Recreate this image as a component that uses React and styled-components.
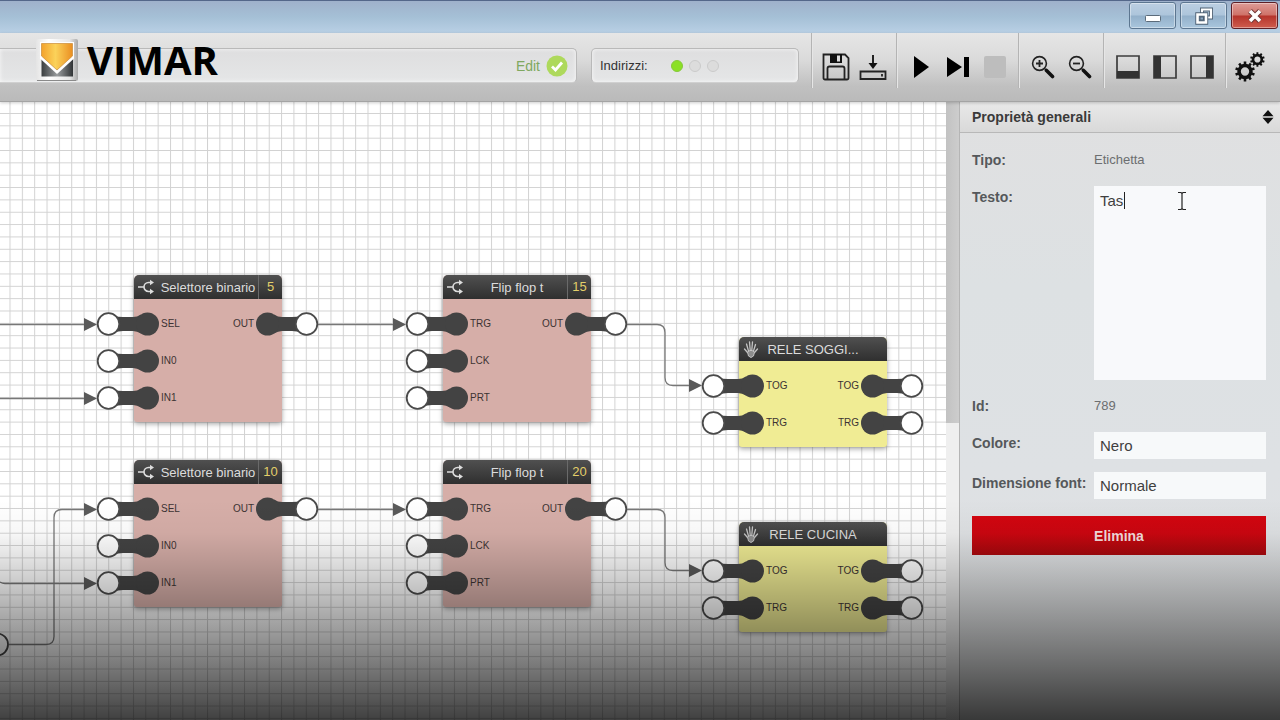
//App.jsx
import React from "react";
import styled, { createGlobalStyle } from "styled-components";

const GlobalStyle = createGlobalStyle`
  * {
    box-sizing: border-box;
  }
  body {
    margin: 0;
    font-family: "Liberation Sans", Arial, sans-serif;
    color: #444;
  }
  button, select, textarea {
    font-family: inherit;
    border: none;
    outline: none;
    margin: 0;
  }
`;

const Window = styled.div`
  position: relative;
  display: flex;
  flex-direction: column;
  min-height: 100vh;
`;

/* title bar */

const TitleBar = styled.header`
  display: flex;
  justify-content: flex-end;
  gap: 4px;
  height: 33px;
  padding: 1px 2px 0 0;
  border-top: 1px solid #54678a;
  background: linear-gradient(#9fb1cb, #a5c0d6 50%, #b9d0e5);
`;

const WindowButton = styled.button`
  display: flex;
  align-items: center;
  justify-content: center;
  width: 47px;
  height: 27px;
  padding: 0;
  border: 1px solid ${(p) => (p.$close ? "#5e1f26" : "#5c7690")};
  border-radius: 3px;
  box-shadow: inset 0 0 0 1px rgba(255, 255, 255, 0.4);
  background: ${(p) =>
    p.$close
      ? "linear-gradient(#dd9c97, #cf7268 48%, #b5342b 52%, #cf5c4e)"
      : "linear-gradient(#bccfe2, #adc5db 48%, #93b0ca 52%, #a9c6dd)"};
`;

/* toolbar */

const Toolbar = styled.div`
  position: relative;
  z-index: 2;
  display: flex;
  height: 69px;
  padding-right: 7px;
  border-bottom: 1px solid #a4a4a4;
  background: linear-gradient(#e6e6e6, #dadada 40%, #c0c0c0 78%, #bababa);
  box-shadow: 0 1px 3px rgba(0, 0, 0, 0.2);
`;

const StatusBox = styled.div`
  display: flex;
  align-items: center;
  height: 35px;
  margin-top: 15px;
  border: 1px solid #b9b9b9;
  border-bottom-color: #d0d0d0;
  background: linear-gradient(#dededf, #e5e6e7);
  box-shadow: inset 0 0 4px rgba(255, 255, 255, 0.8);
  font-size: 13px;
`;

const ModeBox = styled(StatusBox)`
  flex: 1;
  padding: 0 8px 0 36px;
  border-left: none;
  border-radius: 0 5px 5px 0;
`;

const AddressBox = styled(StatusBox)`
  width: 208px;
  margin-left: 14px;
  margin-right: 12px;
  padding-left: 8px;
  border-radius: 5px;
  color: #333;
`;

const Brand = styled.a`
  display: flex;
  align-items: center;
  gap: 8px;
  margin-top: -12px;
  margin-right: auto;
  color: #000;
  font-family: "Open Sans", sans-serif;
  font-size: 40px;
  font-weight: 700;
  line-height: 44px;
  text-decoration: none;
`;

const Mode = styled.span`
  display: flex;
  align-items: center;
  gap: 6px;
  color: #7fa860;
  font-size: 14px;
`;

const Dots = styled.span`
  display: flex;
  gap: 6px;
  margin-left: 23px;
`;

const Dot = styled.i`
  width: 12px;
  height: 12px;
  border: 1px solid ${(p) => (p.$on ? "#86c83c" : "#cbcbcb")};
  border-radius: 50%;
  background: ${(p) => (p.$on ? "#8be025" : "#dcdcdc")};
`;

const ToolGroup = styled.div`
  display: flex;
  align-items: center;
  height: 55px;
  padding: 13px 5px 0;
  border-left: 1px solid #b4b4b4;
  box-shadow: inset 1px 0 0 #e6e6e6;
`;

const ToolButton = styled.button`
  display: flex;
  align-items: center;
  justify-content: center;
  width: 37px;
  height: 37px;
  padding: 0;
  background: none;
`;

/* work area */

const Workspace = styled.main`
  display: flex;
  flex: 1;
`;

const Canvas = styled.section`
  position: relative;
  flex: 1;
  overflow: hidden;
  background: #fff;
`;

const Wires = styled.svg`
  position: absolute;
  top: 0;
  left: 0;
  width: 100%;
  height: 100%;
`;

const ScrollTrack = styled.div`
  width: 14px;
  border-right: 1px solid #b5b5b5;
  background: #efefef;
`;

const ScrollThumb = styled.div`
  height: 52%;
  background: linear-gradient(90deg, #c2c2c2, #cdcdcd);
`;

const Block = styled.article`
  position: absolute;
  left: ${(p) => p.$x}px;
  top: ${(p) => p.$y}px;
  width: 148px;
  border-radius: 5px 5px 3px 3px;
  background: ${(p) => p.$color};
  box-shadow: 0 2px 5px rgba(0, 0, 0, 0.35);
`;

const BlockHeader = styled.div`
  display: flex;
  align-items: center;
  height: 24px;
  border-radius: 5px 5px 0 0;
  background: linear-gradient(#505050, #2f2f2f);
  color: #dcdcdc;
  font-size: 13px;
`;

const BlockIcon = styled.span`
  display: flex;
  width: 24px;
  padding-left: 4px;
`;

const BlockTitle = styled.span`
  flex: 1;
  text-align: center;
  white-space: nowrap;
`;

const BlockNumber = styled.span`
  width: 24px;
  border-left: 1px solid ${(p) => (p.$empty ? "transparent" : "#6a6a6a")};
  color: #e3cf6a;
  line-height: 24px;
  text-align: center;
`;

const BlockBody = styled.div`
  padding: 6px 0;
`;

const PortRow = styled.div`
  display: flex;
  justify-content: space-between;
  height: 37px;
`;

const Port = styled.span`
  display: flex;
  align-items: center;
  flex-direction: ${(p) => (p.$out ? "row-reverse" : "row")};
  margin: ${(p) => (p.$out ? "0 -37px 0 0" : "0 0 0 -38px")};
  gap: 1px;
  color: #3c3333;
  font-size: 10px;
`;

/* properties */

const Panel = styled.aside`
  width: 320px;
  background: linear-gradient(#e0e0e1, #dde1e3 30%, #dee1e4 60%, #dfe0e0);
`;

const PanelHeader = styled.h2`
  display: flex;
  align-items: center;
  justify-content: space-between;
  height: 31px;
  margin: 0;
  padding: 0 6px 0 12px;
  border-bottom: 1px solid #b8b8b8;
  background: linear-gradient(#e9e9e9, #d9d9d9);
  color: #3a3a3a;
  font-size: 14px;
`;

const Form = styled.form`
  padding: 18px 14px 0 12px;
`;

const Field = styled.div`
  position: relative;
  display: grid;
  grid-template-columns: 122px 1fr;
  align-items: start;
  margin-bottom: ${(p) => (p.$tight ? 13 : 17)}px;
  line-height: 18px;
`;

const Label = styled.label`
  padding-top: ${(p) => (p.$box ? 2 : 0)}px;
  color: #55585b;
  font-size: 14px;
  font-weight: 700;
  white-space: nowrap;
`;

const Value = styled.output`
  color: #6c6e70;
  font-size: 13px;
`;

const TextArea = styled.textarea`
  display: block;
  width: 100%;
  height: 194px;
  padding: 6px;
  background: #f8f9fb;
  color: #3f3f3f;
  font-size: 15px;
  line-height: 18px;
  resize: none;
`;

const Select = styled.select`
  width: 100%;
  height: 27px;
  padding: 0 6px;
  appearance: none;
  border-radius: 0;
  background: #f7f9fa;
  color: #3f3f3f;
  font-size: 15px;
`;

const Caret = styled.i`
  position: absolute;
  top: 6px;
  left: 152px;
  width: 1px;
  height: 17px;
  background: #222;
`;

const Pointer = styled.svg`
  position: absolute;
  top: 5px;
  left: 205px;
`;

const DeleteButton = styled.button`
  width: 100%;
  height: 39px;
  margin-top: 4px;
  background: linear-gradient(#d3050f, #cb0610 45%, #a8090d);
  color: #f3dcdc;
  font-size: 14px;
  font-weight: 700;
`;

const Shade = styled.div`
  position: absolute;
  z-index: 3;
  left: 0;
  right: 0;
  bottom: 0;
  height: 220px;
  pointer-events: none;
  background: linear-gradient(
    rgba(0, 0, 0, 0),
    rgba(0, 0, 0, 0.03) 15%,
    rgba(0, 0, 0, 0.12) 27%,
    rgba(0, 0, 0, 0.28) 46%,
    rgba(0, 0, 0, 0.52) 75%,
    rgba(0, 0, 0, 0.75)
  );
`;

const Logo = () => (
  <svg width="43" height="44" viewBox="0 0 43 44">
    <defs>
      <linearGradient id="tile" x1="0" x2="1">
        <stop offset="0" stopColor="#e4e4e4" />
        <stop offset="0.3" stopColor="#fff" />
        <stop offset="0.8" stopColor="#e6e6e6" />
        <stop offset="1" stopColor="#a9a9a9" />
      </linearGradient>
      <linearGradient id="gold" x1="0" x2="1">
        <stop offset="0" stopColor="#f3a22c" />
        <stop offset="0.45" stopColor="#fbd25a" />
        <stop offset="1" stopColor="#ea8f22" />
      </linearGradient>
      <linearGradient id="steel" x1="0" x2="1">
        <stop offset="0" stopColor="#3a3e40" />
        <stop offset="0.5" stopColor="#9a9d9f" />
        <stop offset="1" stopColor="#303335" />
      </linearGradient>
    </defs>
    <rect x="0" y="1" width="42" height="42" rx="2" fill="url(#tile)" />
    <path d="M1 42.500h39" stroke="#8a8a8a" />
    <path d="M5.500 20h31.500v18.500H5.500z" fill="url(#steel)" />
    <path d="M4 4h34v16.500L21 36 4 20.500z" fill="#fff" />
    <path d="M5.500 5.500h31v12.500L21 32 5.500 18z" fill="url(#gold)" stroke="#c98b36" strokeWidth="0.700" />
  </svg>
);

const CheckIcon = () => (
  <svg width="22" height="22" viewBox="0 0 22 22">
    <circle cx="11" cy="11" r="10.500" fill="#aed95c" />
    <path d="M6 11.500 9.500 15 16 7.500" fill="none" stroke="#fff" strokeWidth="2.800" />
  </svg>
);

const SaveIcon = () => (
  <svg width="28" height="28" viewBox="0 0 28 28" fill="none" stroke="#222" strokeWidth="1.800">
    <path d="M1.500 1.500h21.500l3.500 3.500v20a1.500 1.500 0 0 1-1.500 1.500H3a1.500 1.500 0 0 1-1.500-1.500z" />
    <path d="M5.500 26V15.500a2 2 0 0 1 2-2h13a2 2 0 0 1 2 2V26" />
    <path d="M8 1h12v9H8z" fill="#111" stroke="none" />
    <path d="M15 2.500h3v6h-3z" fill="#ddd" stroke="none" />
  </svg>
);

const DownloadIcon = () => (
  <svg width="28" height="28" viewBox="0 0 28 28" fill="none" stroke="#222" strokeWidth="1.800">
    <path d="M1.500 18.500h25v7.500h-25z" />
    <path d="M14 2v9" strokeWidth="2" />
    <path d="M9.500 10h9L14 16z" fill="#111" stroke="none" />
    <path d="M23 21v2.500" />
  </svg>
);

const PlayIcon = () => (
  <svg width="24" height="24" viewBox="0 0 24 24">
    <path d="M5 1v22l15-11z" fill="#000" />
  </svg>
);

const StepIcon = () => (
  <svg width="24" height="24" viewBox="0 0 24 24">
    <path d="M1 2v20l15-10zM18 2h5v20h-5z" fill="#000" />
  </svg>
);

const StopIcon = () => (
  <svg width="24" height="24" viewBox="0 0 24 24">
    <rect x="1" y="1" width="22" height="22" rx="2" fill="#bdbdbd" />
  </svg>
);

const ZoomIcon = ({ plus }) => (
  <svg width="24" height="24" viewBox="0 0 24 24" fill="none" stroke="#222">
    <circle cx="8.500" cy="8.500" r="6.900" strokeWidth="1.600" />
    <path d={plus ? "M5 8.500h7M8.500 5v7" : "M5 8.500h7"} strokeWidth="1.800" />
    <path d="m14 14 1.500 1.500" strokeWidth="2" />
    <path d="m15.500 15.500 6 6" stroke="#111" strokeWidth="3.600" strokeLinecap="round" />
  </svg>
);

const LAYOUT_BARS = { bottom: "M1 16h22v7H1z", left: "M1 1h7v22H1z", right: "M16 1h7v22h-7z" };

const LayoutIcon = ({ side }) => (
  <svg width="24" height="24" viewBox="0 0 24 24">
    <path d="M1 1h22v22H1z" fill="none" stroke="#3c3c3c" strokeWidth="1.700" />
    <path d={LAYOUT_BARS[side]} fill="#333" />
  </svg>
);

const Gear = ({ cx, cy, r }) => (
  <g transform={`translate(${cx} ${cy})`} stroke="#111">
    <circle r={r * 0.6} fill="none" strokeWidth={r * 0.36} />
    {[0, 36, 72, 108, 144].map((a) => (
      <path
        key={a}
        d={`M0 ${-r}V${-r * 0.62}M0 ${r}V${r * 0.62}`}
        strokeWidth={r * 0.26}
        transform={`rotate(${a})`}
      />
    ))}
  </g>
);

const GearsIcon = () => (
  <svg width="30" height="30" viewBox="0 0 30 30">
    <Gear cx={10} cy={19.500} r={9.900} />
    <Gear cx={22.400} cy={7.500} r={7.300} />
  </svg>
);

const LogicIcon = () => (
  <svg width="18" height="16" viewBox="0 0 18 16" fill="none" stroke="#ddd" strokeWidth="1.600">
    <path d="M0 8h6M13 3.500h-2.500a4.500 4.500 0 0 0 0 9H13" />
    <path d="M12 .8 16 3.500 12 6.200zM12 9.800l4 2.700-4 2.700z" fill="#ddd" stroke="none" />
  </svg>
);

const HandIcon = () => (
  <svg width="16" height="18" viewBox="0 0 16 18" fill="none" stroke="#c4c4c4" strokeWidth="1.300">
    <path d="M5.500 11 3.500 4M7.200 10 6.500 2M8.800 10 9.500 2M10.500 11l2-6.500M4.500 12.500 1.500 9M11.500 12.500l3-3.500" strokeLinecap="round" />
    <path d="M4.500 12 7 10.500h2l2.500 1.500-1 4-2.500 1.500-2.500-1.500z" fill="#8d8d8d" strokeWidth="1" />
  </svg>
);

const PinIcon = ({ flip }) => (
  <svg width="64" height="26" viewBox="0 0 64 26">
    <g transform={flip ? "translate(64 0) scale(-1 1)" : undefined}>
      <path d="M18 4.500q4 1.500 9 1.500h10q4 0 8-2.500v19q-4-2.500-8-2.500H27q-5 0-9 1.500z" fill="#434343" />
      <circle cx="51.500" cy="13" r="11.500" fill="#434343" />
      <circle cx="12.500" cy="13" r="10.800" fill="#fff" stroke="#4a4a4a" strokeWidth="1.800" />
    </g>
  </svg>
);

const blocks = [
  { x: 134, y: 173, title: "Selettore binario", number: 5, ins: ["SEL", "IN0", "IN1"], outs: ["OUT"] },
  { x: 443, y: 173, title: "Flip flop t", number: 15, ins: ["TRG", "LCK", "PRT"], outs: ["OUT"] },
  { x: 134, y: 358, title: "Selettore binario", number: 10, ins: ["SEL", "IN0", "IN1"], outs: ["OUT"] },
  { x: 443, y: 358, title: "Flip flop t", number: 20, ins: ["TRG", "LCK", "PRT"], outs: ["OUT"] },
  { x: 739, y: 235, title: "RELE SOGGI...", ins: ["TOG", "TRG"], outs: ["TOG", "TRG"] },
  { x: 739, y: 420, title: "RELE CUCINA", ins: ["TOG", "TRG"], outs: ["TOG", "TRG"] },
];

const wires = [
  "M0 222.500H86",
  "M0 296.500H86",
  "M318 222.500H396",
  "M627 222.500h30q8 0 8 8v45q0 8 8 8h18",
  "M9 542.500h37q8 0 8-8V415.500q0-8 8-8h24",
  "M0 480q2 1.500 5 1.500H86",
  "M318 407.500H396",
  "M627 407.500h30q8 0 8 8v45q0 8 8 8h18",
];

const arrows = [
  [84, 222], [84, 296], [393, 222], [689, 283],
  [84, 407], [84, 481], [393, 407], [689, 468],
];

const FunctionBlock = ({ x, y, title, number, ins, outs }) => (
  <Block $x={x} $y={y} $color={number ? "#d6aea8" : "#f0ec94"}>
    <BlockHeader>
      <BlockIcon>{number ? <LogicIcon /> : <HandIcon />}</BlockIcon>
      <BlockTitle>{title}</BlockTitle>
      <BlockNumber $empty={!number}>{number}</BlockNumber>
    </BlockHeader>
    <BlockBody>
      {ins.map((name, i) => (
        <PortRow key={name}>
          <Port>
            <PinIcon />
            {name}
          </Port>
          {outs[i] && (
            <Port $out>
              <PinIcon flip />
              {outs[i]}
            </Port>
          )}
        </PortRow>
      ))}
    </BlockBody>
  </Block>
);

const App = () => (
  <Window>
    <GlobalStyle />
    <TitleBar>
      <WindowButton aria-label="Riduci">
        <svg width="16" height="16" viewBox="0 0 16 16">
          <rect x="0.500" y="7.500" width="15" height="6" rx="1" fill="#fff" stroke="#5b6b7a" />
        </svg>
      </WindowButton>
      <WindowButton aria-label="Ripristina">
        <svg width="20" height="18" viewBox="0 0 20 18" fill="none">
          <path d="M8 2.500h9v8h-9z" stroke="#4e6073" strokeWidth="4" />
          <path d="M8 2.500h9v8h-9z" stroke="#fff" strokeWidth="2.200" />
          <path d="M3.500 7.500h8.500v8H3.500z" fill="#8aa5bf" stroke="#4e6073" strokeWidth="4.400" />
          <path d="M3.500 7.500h8.500v8H3.500z" stroke="#fff" strokeWidth="2.600" />
          <path d="M6 10h3.500v3H6z" stroke="#4e6073" />
        </svg>
      </WindowButton>
      <WindowButton $close aria-label="Chiudi">
        <svg width="18" height="16" viewBox="0 0 18 16" fill="none">
          <path d="m4 3 10 10M14 3 4 13" stroke="#6d3535" strokeWidth="5.400" />
          <path d="m4 3 10 10M14 3 4 13" stroke="#fff" strokeWidth="3.600" />
        </svg>
      </WindowButton>
    </TitleBar>

    <Toolbar>
      <ModeBox>
        <Brand href="#">
          <Logo />
          VIMAR
        </Brand>
        <Mode>
          Edit
          <CheckIcon />
        </Mode>
      </ModeBox>
      <AddressBox>
        Indirizzi:
        <Dots>
          <Dot $on />
          <Dot />
          <Dot />
        </Dots>
      </AddressBox>
      <ToolGroup>
        <ToolButton aria-label="Salva"><SaveIcon /></ToolButton>
        <ToolButton aria-label="Scarica"><DownloadIcon /></ToolButton>
      </ToolGroup>
      <ToolGroup>
        <ToolButton aria-label="Avvia"><PlayIcon /></ToolButton>
        <ToolButton aria-label="Passo"><StepIcon /></ToolButton>
        <ToolButton aria-label="Ferma" disabled><StopIcon /></ToolButton>
      </ToolGroup>
      <ToolGroup>
        <ToolButton aria-label="Ingrandisci"><ZoomIcon plus /></ToolButton>
        <ToolButton aria-label="Rimpicciolisci"><ZoomIcon /></ToolButton>
      </ToolGroup>
      <ToolGroup>
        <ToolButton aria-label="Pannello inferiore"><LayoutIcon side="bottom" /></ToolButton>
        <ToolButton aria-label="Pannello sinistro"><LayoutIcon side="left" /></ToolButton>
        <ToolButton aria-label="Pannello destro"><LayoutIcon side="right" /></ToolButton>
      </ToolGroup>
      <ToolGroup>
        <ToolButton aria-label="Impostazioni"><GearsIcon /></ToolButton>
      </ToolGroup>
    </Toolbar>

    <Workspace>
      <Canvas>
        <Wires>
          <defs>
            <pattern id="grid" x="9.500" y="11" width="12.345" height="12.345" patternUnits="userSpaceOnUse">
              <path d="M.5 0v12.345M0 .5h12.345" stroke="#d2d2d2" fill="none" />
            </pattern>
          </defs>
          <rect width="100%" height="100%" fill="url(#grid)" />
          {wires.map((d) => (
            <path key={d} d={d} fill="none" stroke="#777" strokeWidth="1.300" />
          ))}
          {arrows.map(([x, y]) => (
            <path key={`${x}-${y}`} d={`M${x} ${y - 6}v13l13-6.500z`} fill="#5a5a5a" />
          ))}
          <circle cx="-3" cy="542.500" r="11" fill="#fff" stroke="#444" strokeWidth="1.800" />
        </Wires>
        {blocks.map((b) => (
          <FunctionBlock key={`${b.x}-${b.y}`} {...b} />
        ))}
      </Canvas>
      <ScrollTrack>
        <ScrollThumb />
      </ScrollTrack>
      <Panel>
        <PanelHeader>
          Proprietà generali
          <svg width="12" height="14" viewBox="0 0 12 14">
            <path d="M6 0l5.500 6.300H.5zM6 14l5.500-6.300H.5z" fill="#111" />
          </svg>
        </PanelHeader>
        <Form>
          <Field>
            <Label htmlFor="tipo">Tipo:</Label>
            <Value id="tipo">Etichetta</Value>
          </Field>
          <Field>
            <Label htmlFor="testo" $box>Testo:</Label>
            <TextArea id="testo" defaultValue="Tas" />
            <Caret />
            <Pointer width="10" height="20" viewBox="0 0 10 20">
              <path d="M1 1.500h3l1 1 1-1h3M1 18.500h3l1-1 1 1h3M5 2.500v15" fill="none" stroke="#222" strokeWidth="1.200" />
            </Pointer>
          </Field>
          <Field>
            <Label htmlFor="id">Id:</Label>
            <Value id="id">789</Value>
          </Field>
          <Field $tight>
            <Label htmlFor="colore" $box>Colore:</Label>
            <Select id="colore" defaultValue="Nero">
              <option>Nero</option>
            </Select>
          </Field>
          <Field $tight>
            <Label htmlFor="font" $box>Dimensione font:</Label>
            <Select id="font" defaultValue="Normale">
              <option>Normale</option>
            </Select>
          </Field>
          <DeleteButton type="button">Elimina</DeleteButton>
        </Form>
      </Panel>
    </Workspace>
    <Shade />
  </Window>
);

export default App;
